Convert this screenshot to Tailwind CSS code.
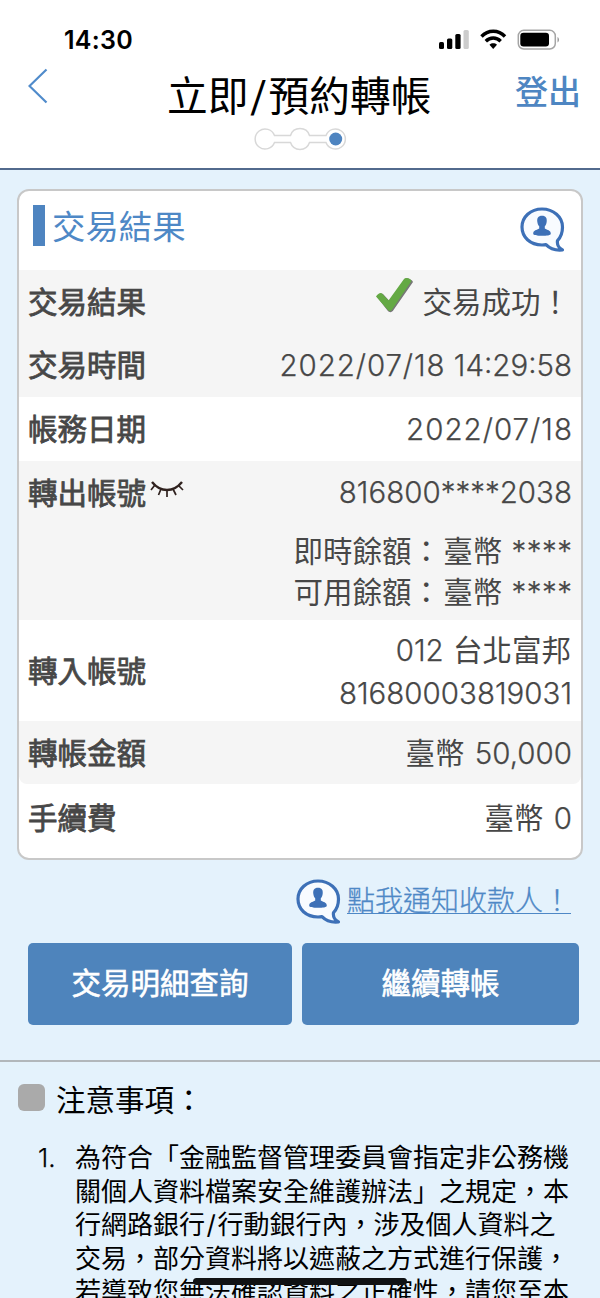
<!DOCTYPE html>
<html lang="zh-Hant">
<head>
<meta charset="utf-8">
<title>立即/預約轉帳</title>
<script src="https://cdn.jsdelivr.net/npm/@tailwindcss/browser@4"></script>
</head>
<body class="relative h-[1298px] w-[600px] overflow-hidden bg-[#e4f2fc] font-['Inter','Noto_Sans_CJK_TC',sans-serif] text-black">
<svg class="hidden">
  <symbol id="contact" viewBox="0 0 46 46">
    <path d="M23 3C11.500 3 3 11 3 21s8 18 20 18c1.500 0 2.700-.1 4-.4 4 4.200 9.500 6 16.500 5.300-4-2-5.600-5.200-5-9.300C42 31 43.500 26 43.500 21 43.500 11 34.500 3 23 3Z" fill="#f8fbff" stroke="#3d70b7" stroke-width="3.200" stroke-linejoin="round"/>
    <path d="M23 9.800c-3.900 0-5.200 2.600-4.700 6 .3 2.200.9 3.500 1.900 4.500v2.200c-2.400 1.500-6 1.700-6 5.200 0 1.600 4 2.100 8.800 2.100s8.800-.5 8.800-2.100c0-3.500-3.600-3.700-6-5.200v-2.200c1-1 1.600-2.300 1.900-4.500.5-3.400-.8-6-4.700-6Z" fill="#3d70b7"/>
  </symbol>
</svg>

<header class="flex h-[170px] flex-col border-b-2 border-[#526a8d] bg-white">
  <div class="flex h-[68px] items-start justify-between pt-[28px] pr-[40px] pl-[64px]">
    <span class="text-[25px] leading-[25px] font-semibold tracking-[0.3px]">14:30</span>
    <svg class="h-[24px] w-[121px]" viewBox="0 0 121 24">
      <rect x="0" y="14" width="5" height="7" rx="1.500"/><rect x="8" y="10.500" width="5.300" height="10.500" rx="1.500"/><rect x="16.300" y="6" width="5.300" height="15" rx="1.500"/><rect x="24.500" y="2" width="5.300" height="19" rx="1.500" fill="#ccc"/>
      <g fill="none" stroke="#000" stroke-width="3.400"><path d="M42.500 8.500C49 1.500 59.500 1.500 66 8.500"/><path d="M46.800 13.200c4.300-4.300 10.600-4.300 14.900 0"/></g>
      <path d="M50.500 16.700c2.200-1.900 5.300-1.900 7.500 0L54.200 21Z"/>
      <rect x="79.300" y="2.300" width="37" height="18.700" rx="5.500" fill="none" stroke="#a5a5a5" stroke-width="1.500"/><rect x="81.300" y="4.800" width="28.700" height="13.700" rx="3.200"/><path d="M118.500 9c2 1 2 4.500 0 5.500Z" fill="#999"/>
    </svg>
  </div>
  <div class="flex h-[58px] items-start pr-[19px] pl-[28px]">
    <svg class="h-[36px] w-[86px]" viewBox="0 0 86 36"><path d="M18.500 1.500 1.500 18l17 16.500" fill="none" stroke="#508bcb" stroke-width="2.200"/></svg>
    <h1 class="ml-[53px] grow text-[40.700px] leading-[57px] font-normal whitespace-nowrap">立即<span class="mx-[1px] inline-block scale-x-125 px-[2px] font-light">/</span>預約轉帳</h1>
    <span class="text-[33px] leading-[49px] font-medium text-[#4e86c2]">登出</span>
  </div>
  <svg class="ml-[253px] h-[26px] w-[94px]" viewBox="0 0 94 26">
    <path d="M21.500 9.500A10 10 0 1 0 21.500 16.500H37.500A10 10 0 0 0 56.500 16.500H73A10 10 0 1 0 73 9.500H56.500A10 10 0 0 0 37.500 9.500Z" fill="#fff" stroke="#d8d8d8" stroke-width="1.500"/>
    <circle cx="82.700" cy="13" r="6.500" fill="#4e84c0"/>
  </svg>
</header>

<main>
  <section class="mt-[19px] ml-[17px] h-[671px] w-[566px] overflow-hidden rounded-[12px] border-2 border-[#c8c8c8] bg-white text-[29.500px] whitespace-nowrap text-[#474747]">
    <div class="flex h-[79px] items-start pl-[14px]">
      <i class="mt-[14px] h-[41px] w-[12px] bg-[#4e84c0]"></i>
      <h2 class="ml-[7px] grow text-[33.400px] leading-[72px] font-normal text-[#4e88c6]">交易結果</h2>
      <svg class="mt-[15px] mr-[16px] h-[46px] w-[46px]"><use href="#contact"/></svg>
    </div>
    <div class="flex h-[63px] justify-between bg-[#f5f5f5] pr-[11px] pl-[9px] leading-[65px]">
      <b class="font-normal [-webkit-text-stroke:0.8px]">交易結果</b>
      <span class="flex"><svg class="mt-[6px] mr-[8px] h-[38px] w-[40px]" viewBox="0 0 40 38"><path d="M3 21c2-3 4.500-4.500 6-3l6.500 7L31 3c1.500-2 7 .500 8 3L19.500 34c-1.500 2.500-4 3-6 .500Z" fill="#777"/><path d="M2 20.500c2-3 4.500-4.500 6-3l6.500 7L30 3c1.500-2 6.500-.5 7.500 2L18.500 33c-1.500 2.500-3.500 2.500-5.500 0Z" fill="#64a944"/></svg>交易成功！</span>
    </div>
    <div class="flex h-[64px] justify-between bg-[#f5f5f5] px-[9px] leading-[65px]">
      <b class="font-normal [-webkit-text-stroke:0.8px]">交易時間</b><span class="font-light [-webkit-text-stroke:0.25px]"><span class="tracking-[0.900px]">2022/07/18</span> 14:29:58</span>
    </div>
    <div class="flex h-[64px] justify-between px-[9px] leading-[65px]">
      <b class="font-normal [-webkit-text-stroke:0.8px]">帳務日期</b><span class="mr-[-1px] font-light tracking-[1px] [-webkit-text-stroke:0.25px]">2022/07/18</span>
    </div>
    <div class="flex h-[159px] justify-between bg-[#f5f5f5] px-[9px]">
      <div class="flex leading-[64px]"><b class="font-normal [-webkit-text-stroke:0.8px]">轉出帳號</b>
        <svg class="mt-[19px] ml-[4px] h-[18px] w-[34px]" viewBox="0 0 34 18" fill="none" stroke="#30221f" stroke-width="1.700"><path d="M2 2c4 5 8 8 15 8s11-3 15-8" stroke-width="2.400"/><path d="M4.500 5.500 1 10M11 9l-2.500 6M17 10v7M23 9l3 6M28.500 5.500 33 10"/></svg>
      </div>
      <div class="flex flex-col text-right"><span class="mb-[7px] leading-[63px] font-light [-webkit-text-stroke:0.25px]">816800****2038</span><span class="leading-[41px]">即時餘額：<span class="ml-[2px]">臺幣</span> <span class="ml-px mr-[-0.500px] font-light tracking-[0.500px] [-webkit-text-stroke:0.25px]">****</span></span><span class="leading-[41px]">可用餘額：<span class="ml-[2px]">臺幣</span> <span class="ml-px mr-[-0.500px] font-light tracking-[0.500px] [-webkit-text-stroke:0.25px]">****</span></span></div>
    </div>
    <div class="flex h-[101px] justify-between px-[9px]">
      <b class="leading-[102px] font-normal [-webkit-text-stroke:0.8px]">轉入帳號</b>
      <div class="flex flex-col pt-[9px] text-right leading-[43px]"><span><span class="mr-px font-light [-webkit-text-stroke:0.25px]">012</span> <span class="mr-px">台北富邦</span></span><span class="font-light [-webkit-text-stroke:0.25px]">81680003819031</span></div>
    </div>
    <div class="flex h-[63px] justify-between rounded-b-[8px] bg-[#f5f5f5] px-[9px] leading-[64px]">
      <b class="font-normal [-webkit-text-stroke:0.8px]">轉帳金額</b><span>臺幣 <span class="ml-[2px] font-light [-webkit-text-stroke:0.25px]">50,000</span></span>
    </div>
    <div class="flex h-[74px] justify-between px-[9px] leading-[68px]">
      <b class="font-normal [-webkit-text-stroke:0.8px]">手續費</b><span>臺幣 <span class="ml-[2px] font-light [-webkit-text-stroke:0.25px]">0</span></span>
    </div>
  </section>

  <div class="flex h-[83px] justify-end pt-[18px] pr-[29px]">
    <svg class="mr-[6px] h-[46px] w-[46px]"><use href="#contact"/></svg>
    <a class="h-[36px] border-b-[1.500px] border-[#4e88c6] text-[28px] leading-[46px] font-light text-[#4e88c6] [-webkit-text-stroke:0.3px]">點我通知收款人！</a>
  </div>

  <div class="flex gap-[10px] pl-[28px] text-center text-[29.500px] leading-[80px] text-white [text-shadow:0_2px_2px_#315a89]">
    <button class="h-[82px] w-[264px] rounded-[5px] bg-[#4e84bc] pb-[2px] font-normal [-webkit-text-stroke:0.6px]">交易明細查詢</button>
    <button class="h-[82px] w-[277px] rounded-[5px] bg-[#4e84bc] pb-[2px] font-normal [-webkit-text-stroke:0.6px]">繼續轉帳</button>
  </div>

  <section class="mt-[35px] border-t-2 border-[#b2b7bb]">
    <div class="flex h-[79px] pl-[18px] text-[29.500px] leading-[77px]"><i class="mt-[22px] mr-[11px] h-[27px] w-[27px] rounded-[6px] bg-[#aaa]"></i>注意事項：</div>
    <div class="flex pl-[38px] text-[26px] leading-[33.600px] whitespace-nowrap">
      <span class="w-[37px] font-light [-webkit-text-stroke:0.25px]">1.</span>
      <p>為符合「金融監督管理委員會指定非公務機<br>關個人資料檔案安全維護辦法」之規定，本<br>行網路銀行<span class="mx-[1.500px]">/</span>行動銀行內，涉及個人資料之<br>交易，部分資料將以遮蔽之方式進行保護，<br>若導致您無法確認資料之正確性，請您至本</p>
    </div>
  </section>
</main>
<div class="absolute top-[1278px] left-[193px] h-[7px] w-[214px] rounded-full bg-[#101214]"></div>
</body>
</html>
